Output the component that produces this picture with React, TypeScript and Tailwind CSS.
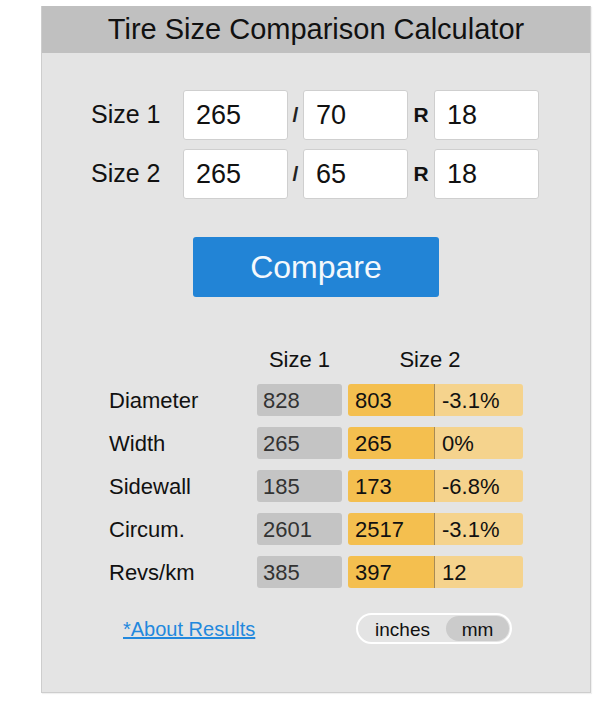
import { useState } from 'react';

const rows = [
  { label: 'Diameter', a: '828', b: '803', diff: '-3.1%' },
  { label: 'Width', a: '265', b: '265', diff: '0%' },
  { label: 'Sidewall', a: '185', b: '173', diff: '-6.8%' },
  { label: 'Circum.', a: '2601', b: '2517', diff: '-3.1%' },
  { label: 'Revs/km', a: '385', b: '397', diff: '12' },
];

const SizeRow = ({ label, width, ratio, rim }: { label: string; width: string; ratio: string; rim: string }) => (
  <div className="flex h-[50px] items-center">
    <span className="w-[92px] text-[25px] text-[#111]">{label}</span>
    <input
      defaultValue={width}
      className="h-[50px] w-[105px] rounded-[3px] border border-[#cfcfcf] bg-white pl-[12px] text-[27px] text-[#111] outline-none"
    />
    <span className="w-[15px] text-center text-[21px] font-bold text-[#222]">/</span>
    <input
      defaultValue={ratio}
      className="h-[50px] w-[105px] rounded-[3px] border border-[#cfcfcf] bg-white pl-[12px] text-[27px] text-[#111] outline-none"
    />
    <span className="w-[26px] text-center text-[21px] font-bold text-[#111]">R</span>
    <input
      defaultValue={rim}
      className="h-[50px] w-[105px] rounded-[3px] border border-[#cfcfcf] bg-white pl-[12px] text-[27px] text-[#111] outline-none"
    />
  </div>
);

export default function App() {
  const [unit, setUnit] = useState<'inches' | 'mm'>('mm');

  return (
    <div className="min-h-[713px] bg-white pt-[6px] font-['Liberation_Sans',Arial,sans-serif]">
      <div className="ml-[41px] flex h-[687px] w-[550px] flex-col border border-t-0 border-[#cdcdcd] bg-[#e4e4e4] shadow-[1px_1px_1px_rgba(0,0,0,0.06)]">
        <div className="flex h-[47px] items-center justify-center bg-[#c0c0c0] text-[29px] text-[#111]">
          Tire Size Comparison Calculator
        </div>

        <div className="mt-[37px] flex flex-col gap-[9px] pl-[49px]">
          <SizeRow label="Size 1" width="265" ratio="70" rim="18" />
          <SizeRow label="Size 2" width="265" ratio="65" rim="18" />
        </div>

        <button
          type="button"
          className="mx-auto mt-[38px] h-[60px] w-[246px] rounded-[3px] bg-[#2284d6] text-[32px] text-[#f4f8fc]"
        >
          Compare
        </button>

        <div className="mt-[50px] flex h-[24px] items-center pl-[215px] text-[22px] text-[#111]">
          <span className="w-[85px] text-center">Size 1</span>
          <span className="ml-[48px] w-[80px] text-center">Size 2</span>
        </div>

        <div className="mt-[13px] flex flex-col gap-[11px] pl-[67px]">
          {rows.map((r) => (
            <div key={r.label} className="flex h-[32px] items-center text-[22px]">
              <span className="w-[148px] text-[#111]">{r.label}</span>
              <div className="flex h-[32px] w-[85px] items-center rounded-[3px] bg-[#c4c4c4] pl-[6px] text-[#333]">
                {r.a}
              </div>
              <div className="ml-[6px] flex h-[32px] w-[175px] overflow-hidden rounded-[3px] text-[#111]">
                <div className="flex w-[87px] items-center border-r border-[#a88b55] bg-[#f4bf4f] pl-[7px]">{r.b}</div>
                <div className="flex flex-1 items-center bg-[#f5d38d] pl-[7px]">{r.diff}</div>
              </div>
            </div>
          ))}
        </div>

        <div className="mt-[25px] flex items-center pl-[81px]">
          <div className="w-[233px]">
            <a href="#" className="text-[20px] text-[#2288dd] underline">
              *About Results
            </a>
          </div>
          <div className="flex h-[31px] w-[156px] items-center rounded-full border-2 border-white p-[1px] text-[19px] text-[#111]">
            <button
              type="button"
              onClick={() => setUnit('inches')}
              className={
                unit === 'inches'
                  ? 'h-full flex-1 rounded-full bg-[#cbcbcb]'
                  : 'h-full flex-1 rounded-full'
              }
            >
              inches
            </button>
            <button
              type="button"
              onClick={() => setUnit('mm')}
              className={
                unit === 'mm'
                  ? 'h-full w-[63px] rounded-full bg-[#cbcbcb]'
                  : 'h-full w-[63px] rounded-full'
              }
            >
              mm
            </button>
          </div>
        </div>
      </div>
    </div>
  );
}
